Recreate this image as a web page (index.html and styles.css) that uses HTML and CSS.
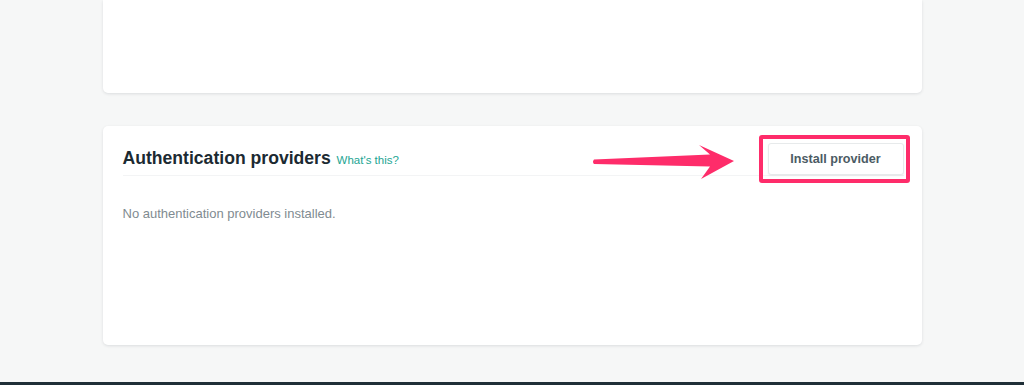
FILE: index.html
```html
<!DOCTYPE html>
<html>
<head>
<meta charset="utf-8">
<link rel="stylesheet" href="styles.css">
</head>
<body>
<div class="page">
  <main class="content">
    <section class="card card-top"></section>
    <section class="card card-auth">
      <header class="card-header">
        <h2 class="title">Authentication providers <a class="help" href="#">What's this?</a></h2>
        <button class="btn">Install provider</button>
      </header>
      <p class="empty">No authentication providers installed.</p>
      <div class="highlight"></div>
      <svg class="arrow" width="150" height="45" viewBox="0 0 150 45">
        <path d="M3 19.5 L119 14.5 L108 5 L143 21 L110 39 L119 26.5 L3 24 Q1 21.75 3 19.5 Z" fill="#fe2c6a"/>
      </svg>
    </section>
  </main>
  <footer class="footer"></footer>
</div>
</body>
</html>
```
FILE: styles.css
```css
html, body {
  margin: 0;
  padding: 0;
  background: #f6f7f7;
  font-family: "Liberation Sans", Arial, sans-serif;
}
.page {
  height: 385px;
  display: flex;
  flex-direction: column;
  overflow: hidden;
}
.content {
  width: 819px;
  margin: 0 auto;
  display: flex;
  flex-direction: column;
  gap: 33px;
  flex: 1;
}
.card {
  background: #fff;
  border-radius: 5px;
  box-shadow: 0 1px 3px rgba(30, 45, 55, 0.12);
}
.card-top {
  height: 93px;
  border-top-left-radius: 0;
  border-top-right-radius: 0;
}
.card-auth {
  position: relative;
  height: 219px;
  padding: 0 18px 0 20px;
  box-sizing: border-box;
}
.card-header {
  display: flex;
  align-items: center;
  justify-content: space-between;
  padding-top: 17px;
  border-bottom: 1px solid #f3f4f5;
  height: 32px;
}
.title {
  margin: 0;
  font-size: 17.6px;
  font-weight: bold;
  color: #1b2a32;
  line-height: 30px;
}
.help {
  font-size: 11.5px;
  font-weight: normal;
  color: #23a593;
  text-decoration: none;
  margin-left: 1px;
}
.btn {
  height: 32px;
  width: 136px;
  background: #fff;
  border: 1px solid #e7eaeb;
  border-radius: 3px;
  box-shadow: 0 1px 2px rgba(0, 0, 0, 0.06);
  font-family: "Liberation Sans", Arial, sans-serif;
  font-size: 12.6px;
  font-weight: bold;
  color: #4c5b64;
  padding: 0;
}
.empty {
  margin: 30px 0 0;
  font-size: 13px;
  color: #7f8b91;
  line-height: 16px;
}
.highlight {
  position: absolute;
  left: 656px;
  top: 9px;
  width: 143px;
  height: 40px;
  border: 4px solid #fe2c6a;
  border-radius: 3px;
}
.arrow {
  position: absolute;
  left: 488px;
  top: 14px;
}
.footer {
  height: 3px;
  background: #1f2f37;
}
```
